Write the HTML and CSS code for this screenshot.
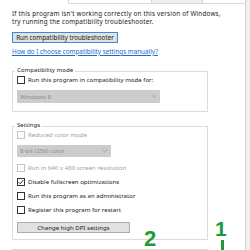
FILE: index.html
```html
<!DOCTYPE html>
<html lang="en">
<head>
  <meta charset="UTF-8" />
  <title>Compatibility</title>
  <link rel="stylesheet" href="styles.css">
</head>
<body>
  <div class="page">
    <div class="dialog">
      <div class="tabs">
        <div class="tab active"></div>
        <div class="tab"></div>
        <div class="tab grey"></div>
        <div class="tab-rest"></div>
      </div>

      <div class="content">
        <p class="intro">If this program isn't working correctly on this version of Windows,<br>try running the compatibility troubleshooter.</p>
        <button class="btn default">Run compatibility troubleshooter</button>
        <a class="link" href="#">How do I choose compatibility settings manually?</a>

        <div class="group first">
          <div class="group-title">Compatibility mode</div>
          <label class="row"><span class="box"></span>Run this program in compatibility mode for:</label>
          <div class="select wide">Windows 8<span class="chev"></span></div>
        </div>

        <div class="group second">
          <div class="group-title">Settings</div>
          <label class="row off"><span class="box"></span>Reduced color mode</label>
          <div class="select narrow">8-bit (256) color<span class="chev"></span></div>
          <label class="row off gap"><span class="box"></span>Run in 640 x 480 screen resolution</label>
          <label class="row"><span class="box checked">
            <svg width="6" height="6" viewBox="0 0 6 6"><path d="M0.6 3.1 L2.3 4.8 L5.4 1" fill="none" stroke="#222" stroke-width="0.9"/></svg>
          </span>Disable fullscreen optimizations</label>
          <label class="row"><span class="box"></span>Run this program as an administrator</label>
          <label class="row"><span class="box"></span>Register this program for restart</label>
          <button class="btn dpi">Change high DPI settings</button>
        </div>

        <div class="group last"></div>

        <div class="mark two">2</div>
        <div class="mark one">1</div>
        <div class="mark-line"></div>
      </div>
    </div>
    <div class="side"></div>
  </div>
</body>
</html>
```

FILE: styles.css
```css
* {
  margin: 0;
  padding: 0;
  box-sizing: border-box;
}

body {
  width: 250px;
  height: 250px;
  overflow: hidden;
  font-family: 'Noto Sans', 'Open Sans', sans-serif;
  font-size: 6.3px;
  line-height: 8px;
  color: #1a1a1a;
  background: #fff;
}

.page {
  display: flex;
  height: 250px;
}

.dialog {
  width: 246px;
  background: #fff;
  border-right: 1px solid #d4d4d4;
  overflow: hidden;
}

.side {
  flex: 1;
  background: #f0f0f0;
}

.tabs {
  display: flex;
  height: 4px;
}

.tab {
  width: 83px;
  border-right: 1px solid #d9d9d9;
  border-bottom: 1px solid #d9d9d9;
}

.tab.active {
  width: 69px;
  border-bottom: none;
}

.tab.grey {
  width: 51px;
  background: #f0f0f0;
}

.tab-rest {
  flex: 1;
  border-bottom: 1px solid #d9d9d9;
}

.content {
  position: relative;
  padding: 6px 0 0 12px;
  height: 246px;
}

.intro {
  line-height: 8px;
  letter-spacing: 0.22px;
}

.btn {
  display: block;
  font-family: inherit;
  font-size: 6.3px;
  color: #1a1a1a;
  background: #e1e1e1;
  border: 1px solid #adadad;
  height: 11px;
  line-height: 9px;
}

.btn.default {
  margin-top: 6px;
  width: 106px;
  border-color: #3c8ad8;
}

.link {
  display: block;
  margin-top: 5px;
  width: fit-content;
  line-height: 8px;
  color: #1a6ac9;
  text-decoration: underline;
}

.group {
  width: 196px;
  border: 1px solid #dcdcdc;
  padding: 0 0 0 4px;
  font-size: 6.1px;
}

.group.first {
  margin-top: 15px;
  padding-bottom: 8px;
}

.group.second {
  margin-top: 14px;
  padding-bottom: 6px;
}

.group.last {
  margin-top: 9px;
  height: 20px;
}

.group-title {
  width: fit-content;
  margin: -6px 0 0 -2px;
  padding: 0 2px;
  background: #fff;
  line-height: 7px;
}

.row {
  display: flex;
  align-items: center;
  height: 8px;
  margin-top: 6px;
  white-space: nowrap;
}

.group-title + .row {
  margin-top: 3px;
}

.row.off {
  color: #a0a0a0;
}

.row.gap {
  margin-top: 7px;
}

.box {
  display: flex;
  align-items: center;
  justify-content: center;
  width: 8px;
  height: 8px;
  border: 1px solid #333;
  background: #fff;
  margin-right: 3px;
  flex-shrink: 0;
}

.row.off .box {
  border-color: #c4c4c4;
}

.select {
  position: relative;
  margin-top: 6px;
  height: 12px;
  line-height: 12px;
  padding-left: 3px;
  background: #cccccc;
  color: #8c8c8c;
}

.select.wide {
  width: 143px;
  height: 13px;
  line-height: 13px;
}

.select.narrow {
  width: 94px;
}

.chev {
  position: absolute;
  right: 4px;
  top: 3px;
  width: 4px;
  height: 4px;
  border-right: 1px solid #b0b0b0;
  border-bottom: 1px solid #b0b0b0;
  transform: rotate(45deg);
}

.btn.dpi {
  margin-top: 8px;
  width: 113px;
  font-size: 6.1px;
}

.mark {
  position: absolute;
  font-family: 'Liberation Sans', Arial, sans-serif;
  font-weight: bold;
  color: #1f9a3a;
  line-height: 1;
}

.mark.two {
  left: 144px;
  top: 224px;
  font-size: 22px;
}

.mark.one {
  left: 215px;
  top: 214px;
  font-size: 21px;
}

.mark-line {
  position: absolute;
  left: 221px;
  top: 236px;
  width: 3px;
  height: 14px;
  background: #1f9a3a;
}
```
